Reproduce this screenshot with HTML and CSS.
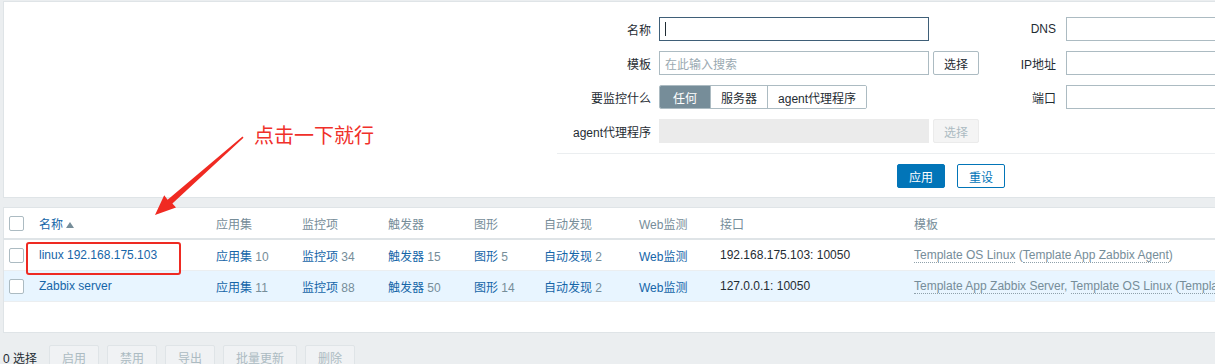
FILE: index.html
```html
<!DOCTYPE html>
<html lang="zh-CN">
<head>
<meta charset="utf-8">
<title>主机</title>
<link rel="stylesheet" href="styles.css">
</head>
<body>
<div class="page">
  <section class="filter">
    <div class="filter-cols">
      <div class="fgrid left">
        <label class="lbl">名称</label>
        <div class="field"><span class="input focus w270"><span class="caret"></span></span></div>
        <label class="lbl">模板</label>
        <div class="field"><span class="input w270 ph">在此输入搜索</span><span class="btn-alt">选择</span></div>
        <label class="lbl">要监控什么</label>
        <div class="field">
          <div class="seg"><span class="seg-i on">任何</span><span class="seg-i">服务器</span><span class="seg-i">agent代理程序</span></div>
        </div>
        <label class="lbl">agent代理程序</label>
        <div class="field"><span class="input w270 disabled"></span><span class="btn-alt dis">选择</span></div>
      </div>
      <div class="fgrid right">
        <label class="lbl">DNS</label>
        <div class="field"><span class="input w200"></span></div>
        <label class="lbl">IP地址</label>
        <div class="field"><span class="input w200"></span></div>
        <label class="lbl">端口</label>
        <div class="field"><span class="input w200"></span></div>
      </div>
    </div>
    <div class="filter-foot">
      <span class="btn-main">应用</span>
      <span class="btn-sec">重设</span>
    </div>
  </section>

  <section class="list">
    <table class="tbl">
      <colgroup>
        <col style="width:30px"><col style="width:177px"><col style="width:86px"><col style="width:86px"><col style="width:86px"><col style="width:70px"><col style="width:95px"><col style="width:81px"><col style="width:194px"><col style="width:500px">
      </colgroup>
      <thead>
        <tr>
          <th><span class="cb"></span></th>
          <th><span class="sort">名称</span><span class="tri"></span></th>
          <th>应用集</th><th>监控项</th><th>触发器</th><th>图形</th><th>自动发现</th><th>Web监测</th><th>接口</th><th>模板</th>
        </tr>
      </thead>
      <tbody>
        <tr>
          <td><span class="cb"></span></td>
          <td class="namecell"><a class="lnk">linux 192.168.175.103</a><span class="redbox"></span></td>
          <td><a class="lnk">应用集</a> <span class="cnt">10</span></td>
          <td><a class="lnk">监控项</a> <span class="cnt">34</span></td>
          <td><a class="lnk">触发器</a> <span class="cnt">15</span></td>
          <td><a class="lnk">图形</a> <span class="cnt">5</span></td>
          <td><a class="lnk">自动发现</a> <span class="cnt">2</span></td>
          <td><a class="lnk">Web监测</a></td>
          <td>192.168.175.103: 10050</td>
          <td class="tpl"><span class="tl">Template OS Linux</span> (<span class="tl">Template App Zabbix Agent</span>)</td>
        </tr>
        <tr class="hl">
          <td><span class="cb"></span></td>
          <td><a class="lnk">Zabbix server</a></td>
          <td><a class="lnk">应用集</a> <span class="cnt">11</span></td>
          <td><a class="lnk">监控项</a> <span class="cnt">88</span></td>
          <td><a class="lnk">触发器</a> <span class="cnt">50</span></td>
          <td><a class="lnk">图形</a> <span class="cnt">14</span></td>
          <td><a class="lnk">自动发现</a> <span class="cnt">2</span></td>
          <td><a class="lnk">Web监测</a></td>
          <td>127.0.0.1: 10050</td>
          <td class="tpl"><span class="tl">Template App Zabbix Server</span>, <span class="tl">Template OS Linux</span> (<span class="tl">Template App Zabbix Agent</span>)</td>
        </tr>
      </tbody>
    </table>
  </section>

  <div class="actions">
    <span class="sel">0 选择</span>
    <span class="btn-dis">启用</span>
    <span class="btn-dis">禁用</span>
    <span class="btn-dis">导出</span>
    <span class="btn-dis">批量更新</span>
    <span class="btn-dis">删除</span>
  </div>

  <div class="note">
    <svg class="arrow" width="100" height="90" viewBox="0 0 100 90">
      <polygon points="5,85 26,77.5 22.4,73.6 93.5,7.7 92.5,6.5 17.6,69.8 14.2,65.2" fill="#f02a22"/>
    </svg>
    <span class="note-text">点击一下就行</span>
  </div>
</div>
</body>
</html>
```

FILE: styles.css
```css
html, body {
  margin: 0;
  padding: 0;
  background: #ebeef0;
  overflow: hidden;
  width: 1215px;
  height: 364px;
}
body {
  font-family: "Liberation Sans", Arial, "Noto Sans CJK SC", sans-serif;
  font-size: 12px;
  color: #1f2c33;
}
.page {
  position: relative;
  padding: 1px 0 0 3px;
  width: 1400px;
}
.filter {
  background: #fff;
  border: 1px solid #dfe4e7;
  border-right: none;
  height: 197px;
  box-sizing: border-box;
  padding-top: 15px;
}
.filter-cols {
  display: flex;
  margin-left: 556px;
}
.fgrid {
  display: grid;
  row-gap: 10px;
  align-items: center;
  grid-auto-rows: 24px;
}
.left {
  grid-template-columns: 91px 320px;
  column-gap: 8px;
}
.right {
  margin-left: 16px;
  grid-template-columns: 61px 200px;
  column-gap: 10px;
}
.lbl {
  text-align: right;
  white-space: nowrap;
  color: #1f2c33;
}
.field {
  display: flex;
  align-items: center;
  gap: 4px;
  height: 24px;
}
.input {
  display: flex;
  align-items: center;
  box-sizing: border-box;
  height: 24px;
  border: 1px solid #acbbc2;
  background: #fff;
  padding: 0 5px;
  color: #1f2c33;
}
.w270 { width: 270px; }
.w200 { width: 200px; }
.input.focus { border-color: #3f5f78; }
.caret {
  width: 1px;
  height: 14px;
  background: #1f2c33;
}
.input.ph { color: #9aa9b1; }
.input.disabled {
  background: #ebebeb;
  border-color: #ebebeb;
}
.btn-alt {
  display: inline-flex;
  align-items: center;
  justify-content: center;
  box-sizing: border-box;
  height: 24px;
  width: 46px;
  border: 1px solid #acbbc2;
  border-radius: 2px;
  background: #fff;
  color: #1f2c33;
}
.btn-alt.dis {
  color: #acbbc2;
  border-color: #ebebeb;
  background: #f4f4f4;
}
.seg {
  display: flex;
  height: 24px;
  box-sizing: border-box;
  border: 1px solid #acbbc2;
  border-radius: 2px;
  overflow: hidden;
}
.seg-i {
  display: flex;
  align-items: center;
  padding: 0 10px;
  border-left: 1px solid #acbbc2;
  background: #fff;
  color: #1f2c33;
}
.seg-i:first-child { border-left: none; }
.seg-i.on {
  background: #768d99;
  color: #fff;
  padding: 0 13px;
}
.filter-foot {
  margin: 10px 0 0 553px;
  border-top: 1px solid #ebeef0;
  padding-top: 10px;
  display: flex;
  gap: 12px;
  padding-left: 340px;
}
.btn-main, .btn-sec {
  display: inline-flex;
  align-items: center;
  justify-content: center;
  box-sizing: border-box;
  height: 24px;
  border-radius: 2px;
  padding: 0 11px;
}
.btn-main {
  background: #0275b8;
  border: 1px solid #0275b8;
  color: #fff;
}
.btn-sec {
  background: #fff;
  border: 1px solid #0275b8;
  color: #0275b8;
}
.list {
  margin-top: 9px;
  background: #fff;
  border: 1px solid #dfe4e7;
  border-right: none;
  height: 126px;
  box-sizing: border-box;
}
.tbl {
  border-collapse: collapse;
  table-layout: fixed;
  width: 1405px;
}
.tbl th, .tbl td {
  text-align: left;
  padding: 0 5px;
  height: 30px;
  white-space: nowrap;
  overflow: visible;
  vertical-align: middle;
}
.tbl th {
  font-weight: normal;
  color: #768d99;
  border-bottom: 2px solid #dfe4e7;
}
.tbl td {
  border-bottom: 1px solid #ebeef0;
}
.tbl tr.hl td { background: #e8f5ff; }
.cb {
  display: block;
  width: 15px;
  height: 15px;
  box-sizing: border-box;
  border: 1px solid #acbbc2;
  border-radius: 2px;
  background: #fff;
}
.sort { color: #1565a8; }
.tri {
  display: inline-block;
  margin-left: 3px;
  width: 0;
  height: 0;
  border-left: 4px solid transparent;
  border-right: 4px solid transparent;
  border-bottom: 6px solid #768d99;
  vertical-align: 1px;
}
.lnk { color: #1565a8; text-decoration: none; }
.cnt { color: #768d99; }
.tpl { color: #768d99; }
.tl { border-bottom: 1px dotted #8fa1ab; }
.namecell { position: relative; }
.redbox {
  position: absolute;
  left: -8px;
  top: 2px;
  width: 155px;
  height: 33px;
  box-sizing: border-box;
  border: 2px solid #ee2a22;
  border-radius: 3px;
}
.actions {
  display: flex;
  align-items: center;
  gap: 8px;
  margin: 12px 0 0 0;
  height: 24px;
}
.sel { color: #1f2c33; margin-right: 4px; }
.btn-dis {
  display: inline-flex;
  align-items: center;
  justify-content: center;
  box-sizing: border-box;
  height: 24px;
  padding: 0 12px;
  border: 1px solid #dfe4e7;
  border-radius: 2px;
  background: #f0f2f4;
  color: #acbbc2;
}
.note {
  position: absolute;
  left: 0;
  top: 0;
}
.arrow {
  position: absolute;
  left: 150px;
  top: 130px;
}
.note-text {
  position: absolute;
  left: 254px;
  top: 120px;
  white-space: nowrap;
  font-family: "Noto Sans CJK SC", sans-serif;
  font-size: 20px;
  color: #f0302a;
}
```
